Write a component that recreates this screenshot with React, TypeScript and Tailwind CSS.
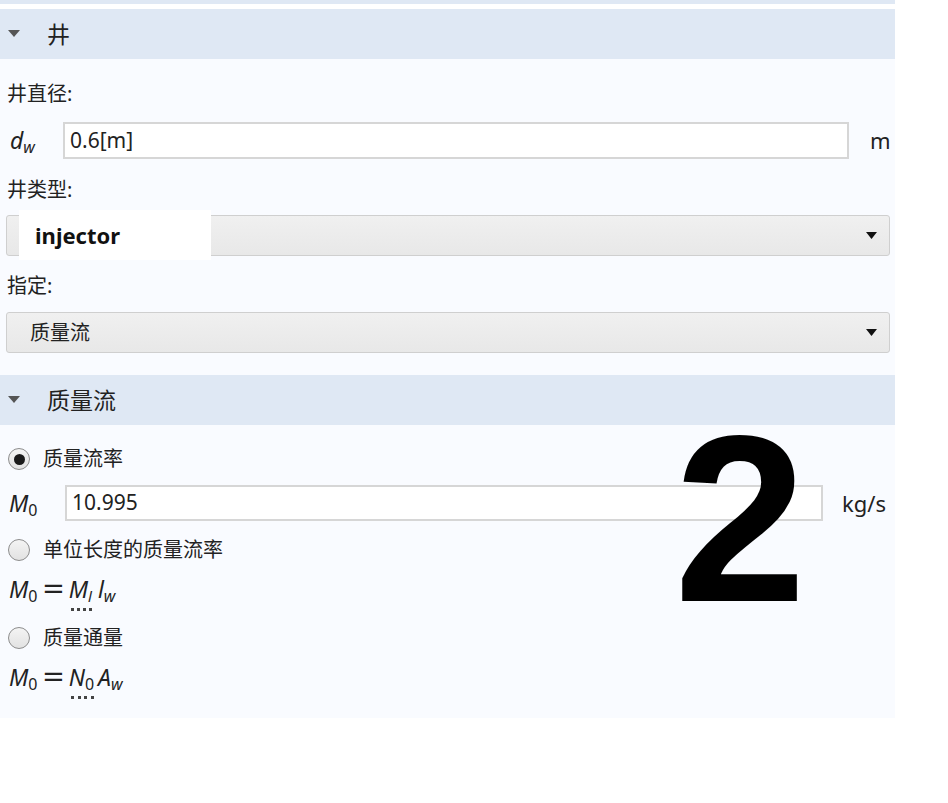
import React from 'react';

const font = { fontFamily: '"Noto Sans", "Noto Sans CJK SC", sans-serif' };

function SectionHeader({ title }: { title: string }) {
  return (
    <div className="h-[50px] bg-[#dfe8f4] flex items-center">
      <svg className="ml-[8px] w-[12px] h-[8px]" viewBox="0 0 12 8">
        <path d="M0 0 L12 0 L6 7 Z" fill="#555" />
      </svg>
      <span className="ml-[27px] text-[23px] text-[#222]">{title}</span>
    </div>
  );
}

function Label({ text }: { text: string }) {
  return <div className="h-[40px] flex items-center pl-[7px] text-[20px] text-[#222]">{text}</div>;
}

function Arrow() {
  return (
    <svg className="w-[11px] h-[7px]" viewBox="0 0 11 7">
      <path d="M0 0 L11 0 L5.5 7 Z" fill="#111" />
    </svg>
  );
}

function Dropdown({ children }: { children: React.ReactNode }) {
  return (
    <div className="relative ml-[6px] w-[884px] h-[41px] rounded-[3px] border border-[#cfcfcf] bg-gradient-to-b from-[#f0f0f0] to-[#e8e8e8] flex items-center justify-between pr-[12px]">
      <div className="flex items-center">{children}</div>
      <Arrow />
    </div>
  );
}

function Radio({ checked, label }: { checked?: boolean; label: string }) {
  return (
    <div className="h-[38px] flex items-center pl-[8px]">
      <div className="w-[22px] h-[22px] rounded-full border border-[#8d8d8d] bg-gradient-to-b from-[#f4f4f4] to-[#e2e2e2] flex items-center justify-center">
        {checked && <div className="w-[11px] h-[11px] rounded-full bg-[#1a1a1a]" />}
      </div>
      <span className="ml-[13px] text-[20px] text-[#222]">{label}</span>
    </div>
  );
}

function M0() {
  return (
    <span className="italic">
      M<sub className="not-italic text-[16px]">0</sub>
    </span>
  );
}

function Eq() {
  return <span className="mx-[7px] text-[30px] leading-none not-italic scale-x-125 inline-block">=</span>;
}

function Dotted({ children }: { children: React.ReactNode }) {
  return (
    <span className="relative inline-block">
      {children}
      <span className="absolute left-[2px] right-[0px] bottom-[-5px] border-b-[3px] border-dotted border-[#444]" />
    </span>
  );
}

export default function App() {
  return (
    <div className="relative w-[948px] h-[803px] bg-white overflow-hidden" style={font}>
      <div className="w-[895px] bg-[#f9fbff]">
        <div className="h-[4px] bg-[#dfe8f4]" />
        <div className="h-[5px] bg-white" />
        <SectionHeader title="井" />

        <div className="pt-[15px]">
          <Label text="井直径:" />
          <div className="mt-[8px] h-[37px] flex items-center">
            <div className="w-[63px] pl-[10px] text-[23px] text-[#222] italic">
              d<sub className="text-[16px]">w</sub>
            </div>
            <div className="w-[786px] h-[37px] bg-white border-2 border-[#d6d6d6] flex items-center pl-[5px] text-[21px] text-[#222]">
              0.6[m]
            </div>
            <div className="ml-[21px] text-[22px] text-[#222]">m</div>
          </div>

          <div className="mt-[11px]">
            <Label text="井类型:" />
          </div>
          <div className="relative mt-[5px]">
            <Dropdown>
              <span />
            </Dropdown>
            <div className="absolute left-[19px] top-[-5px] w-[192px] h-[50px] bg-white flex items-center pl-[16px] text-[22px] font-bold text-[#111]">
              injector
            </div>
          </div>

          <div className="mt-[10px]">
            <Label text="指定:" />
          </div>
          <div className="mt-[6px]">
            <Dropdown>
              <span className="ml-[23px] text-[20px] text-[#222]">质量流</span>
            </Dropdown>
          </div>
        </div>

        <div className="mt-[22px]">
          <SectionHeader title="质量流" />
        </div>

        <div className="pt-[15px] pb-[21px] text-[#222]">
          <Radio checked label="质量流率" />
          <div className="mt-[7px] h-[36px] flex items-center">
            <div className="w-[65px] pl-[9px] text-[23px]">
              <M0 />
            </div>
            <div className="w-[758px] h-[36px] bg-white border-2 border-[#d6d6d6] flex items-center pl-[5px] text-[21px]">
              10.995
            </div>
            <div className="ml-[19px] text-[22px]">kg/s</div>
          </div>
          <div className="mt-[10px]">
            <Radio label="单位长度的质量流率" />
          </div>
          <div className="h-[40px] flex items-center pl-[9px] text-[23px]">
            <M0 />
            <Eq />
            <Dotted>
              <span className="italic">
                M<sub className="text-[15px]">l</sub>
              </span>
            </Dotted>
            <span className="italic ml-[6px]">
              l<sub className="text-[16px]">w</sub>
            </span>
          </div>
          <div className="mt-[10px]">
            <Radio label="质量通量" />
          </div>
          <div className="h-[40px] flex items-center pl-[9px] text-[23px]">
            <M0 />
            <Eq />
            <Dotted>
              <span className="italic">
                N<sub className="not-italic text-[16px]">0</sub>
              </span>
            </Dotted>
            <span className="italic ml-[4px]">
              A<sub className="text-[16px]">w</sub>
            </span>
          </div>
        </div>
      </div>

      <div
        className="absolute left-[674px] top-[400px] text-[238px] leading-none font-bold text-black"
        style={{ fontFamily: '"Liberation Sans", Arial, sans-serif' }}
      >
        2
      </div>
    </div>
  );
}
